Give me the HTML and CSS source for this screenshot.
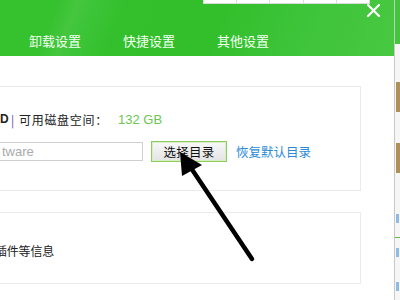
FILE: index.html
```html
<!DOCTYPE html>
<html>
<head>
<meta charset="utf-8">
<link rel="stylesheet" href="styles.css">
</head>
<body>
<div class="screen">
  <div class="dialog">
    <div class="header">
      <div class="topbox">
        <span class="cell"></span><span class="cell"></span><span class="cell"></span><span class="cell"></span><span class="cell last"></span>
      </div>
      <div class="close">
        <svg width="13" height="13" viewBox="0 0 13 13"><path d="M1 1L12 12M12 1L1 12" stroke="#fff" stroke-width="2.2" stroke-linecap="square"/></svg>
      </div>
      <div class="tabs">
        <span class="tab">卸载设置</span>
        <span class="tab">快捷设置</span>
        <span class="tab">其他设置</span>
      </div>
    </div>
    <div class="body">
      <div class="panel panel1">
        <div class="row info">
          <span class="drive">D</span>
          <span class="sep">|</span>
          <span class="label">可用磁盘空间：</span>
          <span class="space">132 GB</span>
        </div>
        <div class="row pathrow">
          <div class="input">tware</div>
          <div class="btn">选择目录</div>
          <span class="link">恢复默认目录</span>
        </div>
      </div>
      <div class="panel panel2">
        <div class="row"><span class="desc">插件等信息</span></div>
      </div>
    </div>
  </div>
  <div class="strip">
    <div class="s-green"></div>
    <div class="s-brown b1"></div>
    <div class="s-brown b2"></div>
    <div class="s-blue t1"></div>
    <div class="s-line"></div>
    <div class="s-blue t2"></div>
    <div class="s-blue t3"></div>
  </div>
  <svg class="arrow" width="400" height="300" viewBox="0 0 400 300">
    <line x1="252" y1="259" x2="187" y2="162" stroke="#000" stroke-width="4.5" stroke-linecap="round"/>
    <polygon points="180,152 182,176 202,165" fill="#000"/>
  </svg>
</div>
</body>
</html>
```
FILE: styles.css
```css
html, body {
  margin: 0;
  padding: 0;
  background: #fff;
  overflow: hidden;
}
.screen {
  width: 400px;
  height: 300px;
  display: flex;
  position: relative;
  overflow: hidden;
  font-family: "Noto Sans CJK SC", "Liberation Sans", sans-serif;
}
.dialog {
  width: 394px;
  flex: none;
  display: flex;
  flex-direction: column;
  background: #fff;
}
.header {
  height: 56px;
  position: relative;
  background: linear-gradient(112deg, #36c12f 0%, #36c12f 14%, #45c63e 19%, #3ec53a 22%, #34c02d 30%, #33bf2c 55%, #3ec43a 75%, #48c841 100%);
  display: flex;
  align-items: flex-end;
}
.topbox {
  position: absolute;
  left: 203px;
  top: -1px;
  height: 4px;
  width: 165px;
  display: flex;
  background: #fff;
  border: 1px solid #d8dcd8;
  border-top: none;
}
.cell {
  flex: 1;
  border-right: 1px solid #dcdcdc;
}
.cell.last { border-right: none; }
.close {
  position: absolute;
  left: 367px;
  top: 4px;
  width: 13px;
  height: 13px;
}
.close svg { display: block; }
.tabs {
  display: flex;
  gap: 42px;
  padding-left: 29px;
  padding-bottom: 5px;
}
.tab {
  color: #f2fff0;
  font-size: 13px;
  line-height: 20px;
  width: 52px;
  white-space: nowrap;
}
.body {
  flex: 1;
  padding-top: 30px;
  display: flex;
  flex-direction: column;
  gap: 21px;
}
.panel {
  margin-left: -10px;
  width: 371px;
  border: 1px solid #eaeaea;
  box-sizing: border-box;
  padding-left: 10px;
}
.panel1 {
  height: 105px;
  padding-top: 22px;
}
.panel2 {
  height: 72px;
  padding-top: 29px;
}
.row {
  display: flex;
  align-items: center;
  font-size: 12px;
  color: #222;
}
.info { height: 20px; }
.drive {
  font-weight: bold;
  width: 11px;
  margin-left: -1px;
  font-family: "Liberation Sans", sans-serif;
  font-size: 12px;
}
.sep {
  color: #6a3ea0;
  width: 8px;
}
.label { width: 99px; letter-spacing: 0.7px; }
.space {
  color: #6cc653;
  font-family: "Liberation Sans", sans-serif;
  font-size: 13px;
}
.pathrow {
  margin-top: 11px;
  height: 22px;
}
.input {
  margin-left: -10px;
  width: 152px;
  height: 19px;
  box-sizing: border-box;
  border: 1px solid #cfcfcf;
  color: #aaa;
  font-family: "Liberation Sans", sans-serif;
  font-size: 13px;
  line-height: 17px;
  padding-left: 10px;
}
.btn {
  margin-left: 8px;
  width: 76px;
  height: 21px;
  box-sizing: border-box;
  border: 1px solid #8dcc5e;
  box-shadow: inset 0 0 0 1px #d8efc6;
  background: linear-gradient(#f8f8f8, #e4e4e4);
  color: #111;
  font-size: 12.5px;
  display: flex;
  align-items: center;
  justify-content: center;
  letter-spacing: 0.3px;
}
.link {
  margin-left: 9px;
  color: #2b8bd9;
  font-size: 12.5px;
}
.desc {
  margin-left: -6px;
  font-size: 12px;
  color: #222;
  letter-spacing: -0.2px;
}
.strip {
  flex: 1;
  position: relative;
  background: #f6f6f6;
  border-left: 1px solid #c8c8c8;
}
.strip > div { position: absolute; left: 0; width: 5px; }
.s-green { top: 0; height: 44px; background: #44c63c; width: 5px; }
.s-brown { background: #b0905a; width: 4px !important; left: 1px !important; }
.b1 { top: 82px; height: 30px; }
.b2 { top: 143px; height: 30px; }
.s-blue { background: #8fbce6; height: 9px; width: 3px !important; left: 1px !important; }
.t1 { top: 214px; }
.t2 { top: 248px; }
.t3 { top: 282px; }
.s-line { top: 237px; height: 1px; background: #5cbf3c; }
.arrow {
  position: absolute;
  left: 0;
  top: 0;
  pointer-events: none;
}
```
